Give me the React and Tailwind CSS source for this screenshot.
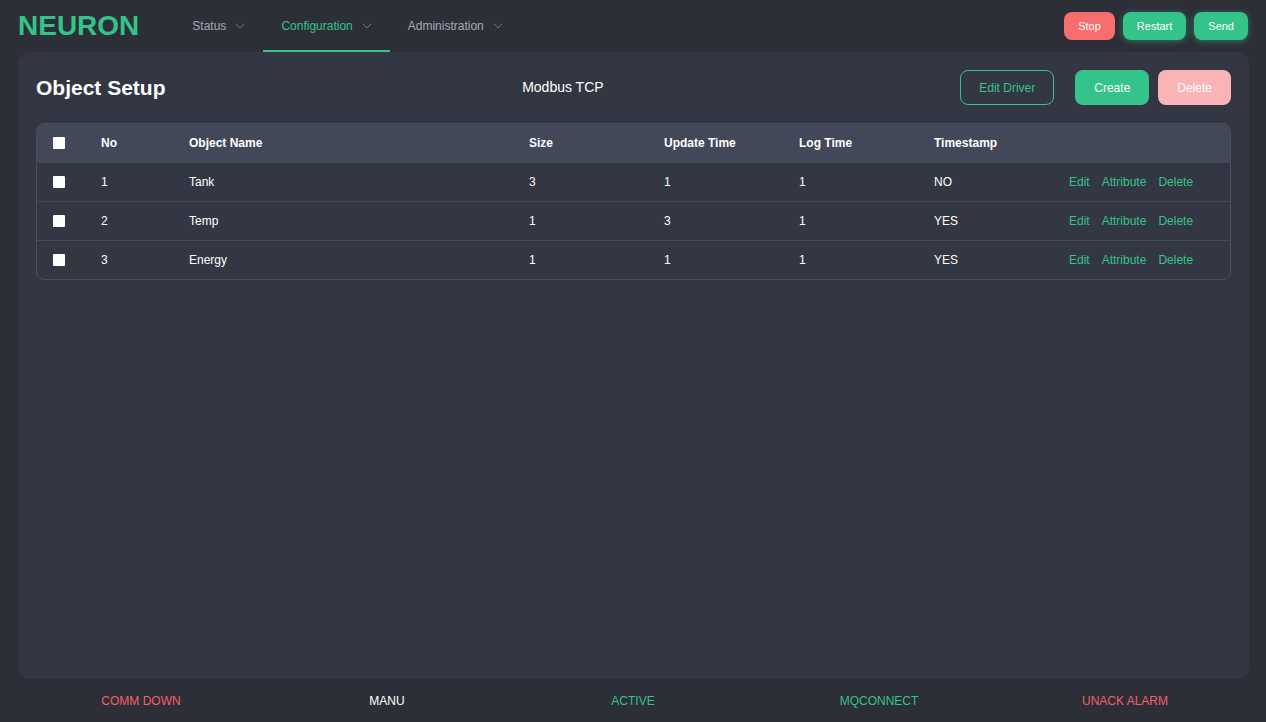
const menus = [
  { label: 'Status', active: false },
  { label: 'Configuration', active: true },
  { label: 'Administration', active: false },
];

const rows = [
  { no: 1, name: 'Tank', size: 3, update: 1, log: 1, timestamp: 'NO' },
  { no: 2, name: 'Temp', size: 1, update: 3, log: 1, timestamp: 'YES' },
  { no: 3, name: 'Energy', size: 1, update: 1, log: 1, timestamp: 'YES' },
];

const statuses = [
  { label: 'COMM DOWN', color: 'text-[#f55f63]' },
  { label: 'MANU', color: 'text-white' },
  { label: 'ACTIVE', color: 'text-[#34c388]' },
  { label: 'MQCONNECT', color: 'text-[#34c388]' },
  { label: 'UNACK ALARM', color: 'text-[#f55f63]' },
];

function Chevron() {
  return (
    <svg className="h-2 w-2.5 text-[#747783]" viewBox="0 0 10 8" fill="none" stroke="currentColor" aria-hidden="true">
      <path d="M1 2L5 5.8L9 2" />
    </svg>
  );
}

function Check({ label }) {
  return (
    <input
      type="checkbox"
      aria-label={label}
      className="block size-3 appearance-none rounded-[1px] bg-white checked:bg-[#34c388]"
    />
  );
}

function Header() {
  return (
    <header className="flex h-13 items-center justify-between px-[18px]">
      <div className="flex h-full items-center">
        <a href="#" className="mr-[35px] text-[28px] leading-none font-bold text-[#34c388]">NEURON</a>
        <nav className="flex h-full">
          {menus.map((m) => (
            <button
              key={m.label}
              type="button"
              className={
                m.active
                  ? 'flex items-center gap-[9px] border-y-2 border-t-transparent border-b-[#34c388] px-[18px] text-[#34c388]'
                  : 'flex items-center gap-[9px] border-y-2 border-transparent px-[18px] text-[#a6a8b5]'
              }
            >
              {m.label}
              <Chevron />
            </button>
          ))}
        </nav>
      </div>
      <div className="flex gap-2 text-[11px] text-white">
        <button type="button" className="h-7 rounded-lg bg-[#f86d6d] px-3.5">Stop</button>
        <button type="button" className="h-7 rounded-lg bg-[#34c388] px-3.5 shadow-[0_1px_6px_#34c38880]">Restart</button>
        <button type="button" className="h-7 rounded-lg bg-[#34c388] px-3.5 shadow-[0_1px_6px_#34c38880]">Send</button>
      </div>
    </header>
  );
}

function ObjectTable() {
  return (
    <div className="overflow-hidden rounded-lg border border-[#4a4e5d]">
      <table className="w-full table-fixed border-separate border-spacing-0 text-left text-white">
        <colgroup>
          <col className="w-12" />
          <col className="w-[88px]" />
          <col />
          <col className="w-[135px]" />
          <col className="w-[135px]" />
          <col className="w-[135px]" />
          <col className="w-[135px]" />
          <col className="w-[177px]" />
        </colgroup>
        <thead className="bg-[#434858] [&_th]:h-[39px] [&_th]:border-b [&_th]:border-[#434858] [&_th]:px-4">
          <tr>
            <th><Check label="Select all objects" /></th>
            <th>No</th>
            <th>Object Name</th>
            <th>Size</th>
            <th>Update Time</th>
            <th>Log Time</th>
            <th>Timestamp</th>
            <th aria-label="Actions" />
          </tr>
        </thead>
        <tbody className="[&_td]:h-[39px] [&_td]:border-b [&_td]:border-[#454957] [&_td]:px-4 [&_tr:last-child_td]:h-[38px] [&_tr:last-child_td]:border-b-0">
          {rows.map((r) => (
            <tr key={r.no}>
              <td><Check label={r.name} /></td>
              <td>{r.no}</td>
              <td>{r.name}</td>
              <td>{r.size}</td>
              <td>{r.update}</td>
              <td>{r.log}</td>
              <td>{r.timestamp}</td>
              <td>
                <div className="flex gap-3 text-[#34c388]">
                  <a href="#">Edit</a>
                  <a href="#">Attribute</a>
                  <a href="#">Delete</a>
                </div>
              </td>
            </tr>
          ))}
        </tbody>
      </table>
    </div>
  );
}

export default function App() {
  return (
    <div className="flex min-h-screen flex-col bg-[#2d2f38] font-['Liberation_Sans',Arial,sans-serif] text-[12px]">
      <Header />
      <main className="mr-[17px] ml-[18px] flex-1 rounded-xl bg-[#333743] p-[18px]">
        <div className="mb-[18px] flex items-center justify-between text-white">
          <h1 className="text-[21px] leading-none font-bold">Object Setup</h1>
          <p className="text-[14px]">Modbus TCP</p>
          <div className="flex">
            <button type="button" className="mr-[21px] h-[35px] rounded-lg border border-[#34c388] px-[18px] text-[#34c388]">Edit Driver</button>
            <button type="button" className="mr-[9px] h-[35px] rounded-lg bg-[#34c388] px-[19px]">Create</button>
            <button type="button" className="h-[35px] rounded-lg bg-[#fab4b6] px-[19px]">Delete</button>
          </div>
        </div>
        <ObjectTable />
      </main>
      <footer className="grid h-[43px] grid-cols-5 items-center px-[18px] text-center">
        {statuses.map((s) => (
          <span key={s.label} className={s.color}>{s.label}</span>
        ))}
      </footer>
    </div>
  );
}
